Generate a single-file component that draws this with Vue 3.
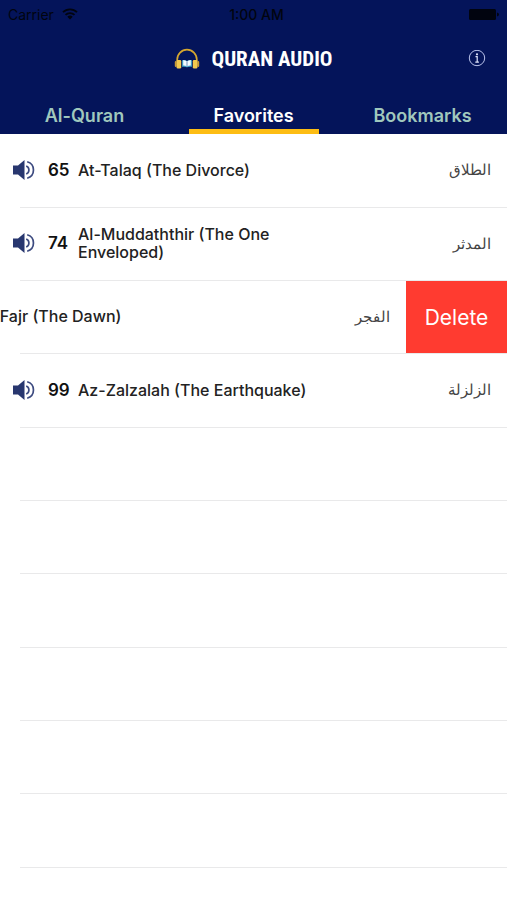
<script setup>
import { ref } from 'vue'

const tabs = ['Al-Quran', 'Favorites', 'Bookmarks']
const active = ref('Favorites')
const swiped = ref(89)
const emptyRows = 7

const favorites = ref([
  { number: 65, name: 'At-Talaq (The Divorce)', arabic: 'الطلاق' },
  { number: 74, name: 'Al-Muddaththir (The One Enveloped)', arabic: 'المدثر' },
  { number: 89, name: 'Al-Fajr (The Dawn)', arabic: 'الفجر' },
  { number: 99, name: 'Az-Zalzalah (The Earthquake)', arabic: 'الزلزلة' },
])

function remove(number) {
  favorites.value = favorites.value.filter((s) => s.number !== number)
}
</script>

<template>
  <div class="app">
    <header class="header">
      <div class="status">
        <div class="carrier">
          <span>Carrier</span>
          <svg class="wifi" viewBox="0 0 16 12" aria-hidden="true">
            <path d="M1 4.2a10 10 0 0 1 14 0M3.5 6.900a6.400 6.400 0 0 1 9 0" fill="none" stroke="currentColor" stroke-width="1.800" />
            <path d="M8 11.600 5.300 8.800a3.900 3.900 0 0 1 5.400 0z" fill="currentColor" />
          </svg>
        </div>
        <span class="time">1:00 AM</span>
        <svg class="battery" viewBox="0 0 30 11" aria-hidden="true">
          <rect width="27" height="11" rx="1.500" fill="currentColor" />
          <path d="M28 3.500q2 .3 2 2t-2 2z" fill="currentColor" />
        </svg>
      </div>

      <div class="brand">
        <svg class="logo" viewBox="0 0 26 22" aria-hidden="true">
          <path d="M3.200 13V11.500a9.800 9.800 0 0 1 19.600 0V13" fill="none" stroke="#d6a72f" stroke-width="1.700" />
          <rect x="0.800" y="13" width="2" height="6" rx="1" fill="#c99b35" />
          <rect x="23.200" y="13" width="2" height="6" rx="1" fill="#c99b35" />
          <rect x="2.600" y="12" width="4.600" height="8.500" rx="1.200" fill="#f2c94e" />
          <rect x="18.800" y="12" width="4.600" height="8.500" rx="1.200" fill="#f2c94e" />
          <path d="M8 12.300q3-.6 5 .8 2-1.400 5-.8v6.500q-3-.5-5 .5-2-1-5-.5z" fill="#3d9fc4" />
          <path d="M9.200 12q2.500 0 3.800 1.500 1.300-1.500 3.800-1.500v5.400q-2.500 0-3.800 1.200-1.300-1.200-3.800-1.200z" fill="#f4fbff" />
          <path d="M13 13.500v5" stroke="#4a79ad" stroke-width=".8" />
        </svg>
        <h1 class="title">QURAN AUDIO</h1>
        <button class="info" type="button" aria-label="Information">
          <svg viewBox="0 0 18 18" aria-hidden="true">
            <circle cx="9" cy="8" r="7.700" fill="none" stroke="#b9c2ea" stroke-width="1" />
            <circle cx="9" cy="4.300" r="1.100" fill="#dfe4fa" />
            <path d="M7.500 6.700H9.200V12M7.300 12.100h3.600" fill="none" stroke="#dfe4fa" stroke-width="1.200" />
          </svg>
        </button>
      </div>

      <nav class="tabs">
        <button
          v-for="tab in tabs"
          :key="tab"
          type="button"
          class="tab"
          :class="{ active: tab === active }"
          @click="active = tab"
        >
          <span class="tab-label">{{ tab }}</span>
        </button>
      </nav>
    </header>

    <main>
      <ul class="list">
        <li v-for="s in favorites" :key="s.number" class="row">
          <div class="track" :class="{ swiped: s.number === swiped }">
            <div class="surah">
              <button class="play" type="button" :aria-label="s.name">
                <svg viewBox="0 0 22 22" aria-hidden="true">
                  <path d="M0 6.500h5L11.500 1v20L5 15.500H0z" fill="#28376f" />
                  <path d="M13.200 7a4.300 4.300 0 0 1 0 8" fill="none" stroke="#3d4b80" stroke-width="1.700" />
                  <path d="M14.200 2.800a8.500 8.500 0 0 1 0 16.400" fill="none" stroke="#3d4b80" stroke-width="1.700" />
                </svg>
              </button>
              <span class="number">{{ s.number }}</span>
              <span class="name">{{ s.name }}</span>
              <span class="arabic" lang="ar" dir="rtl">{{ s.arabic }}</span>
            </div>
            <button v-if="s.number === swiped" class="delete" type="button" @click="remove(s.number)">Delete</button>
          </div>
        </li>
        <li v-for="n in emptyRows" :key="'empty-' + n" class="row" aria-hidden="true"></li>
      </ul>
    </main>
  </div>
</template>

<style>
body {
  background: #fff;
}
</style>

<style scoped>
.app {
  height: 100vh;
  overflow: hidden;
  background: #fff;
  color: #222;
  font-family: Inter, "Noto Sans", sans-serif;
}

button {
  margin: 0;
  padding: 0;
  border: 0;
  background: none;
  color: inherit;
  font: inherit;
  cursor: pointer;
}

svg {
  display: block;
}

.header {
  background: #04145a;
}

.status {
  display: grid;
  grid-template-columns: 1fr auto 1fr;
  align-items: center;
  height: 28px;
  padding: 0 8px;
  color: #01040f;
  font-size: 14px;
}

.carrier {
  display: flex;
  align-items: center;
  gap: 8px;
}

.wifi {
  width: 16px;
  height: 12px;
}

.time {
  padding-left: 6px;
  font-weight: 500;
}

.battery {
  width: 30px;
  height: 11px;
  justify-self: end;
}

.brand {
  display: grid;
  grid-template-columns: 1fr auto auto 1fr;
  align-items: center;
  column-gap: 11px;
  height: 62px;
  padding: 0 21px;
}

.logo {
  grid-column: 2;
  width: 26px;
  height: 22px;
}

.title {
  margin: 0;
  color: #fff;
  font-family: "Liberation Sans Narrow", "Roboto Condensed", "DejaVu Sans Condensed", sans-serif;
  font-size: 21px;
  font-weight: 700;
  line-height: 24px;
}

.info {
  justify-self: end;
}

.info svg {
  width: 18px;
  height: 18px;
}

.tabs {
  display: grid;
  grid-template-columns: repeat(3, 1fr);
}

.tab {
  display: flex;
  justify-content: center;
  color: #a0c8bd;
  font-size: 18px;
  font-weight: 600;
  line-height: 22px;
}

.tab-label {
  width: 130px;
  padding: 15px 0 2px;
  border-bottom: 5px solid transparent;
}

.tab.active {
  color: #fff;
}

.tab.active .tab-label {
  border-color: #fdbd14;
}

.list {
  margin: 0;
  padding: 0;
  list-style: none;
}

.row {
  display: grid;
  grid-template-rows: 1fr 1px;
  grid-template-columns: 100%;
  height: 73px;
  overflow: hidden;
}

.row:nth-child(3n + 1) {
  height: 74px;
}

.row::after {
  grid-row: 2;
  margin-left: 20px;
  background: #e9e9ea;
  content: "";
}

.track {
  display: flex;
}

.swiped {
  margin-left: -101px;
  width: calc(100% + 101px);
}

.surah {
  display: flex;
  flex: 1;
  align-items: center;
  padding: 0 16px 2px 13px;
}

.play svg {
  width: 22px;
  height: 22px;
}

.number {
  width: 30px;
  padding-left: 13px;
  color: #111;
  font-size: 17px;
  font-weight: 600;
}

.name {
  width: 230px;
  font-size: 16px;
  font-weight: 500;
  line-height: 18px;
}

.arabic {
  margin-left: auto;
  color: #444;
  font-size: 15px;
}

.delete {
  width: 101px;
  background: #ff3b30;
  color: #fff;
  font-size: 21px;
}
</style>
